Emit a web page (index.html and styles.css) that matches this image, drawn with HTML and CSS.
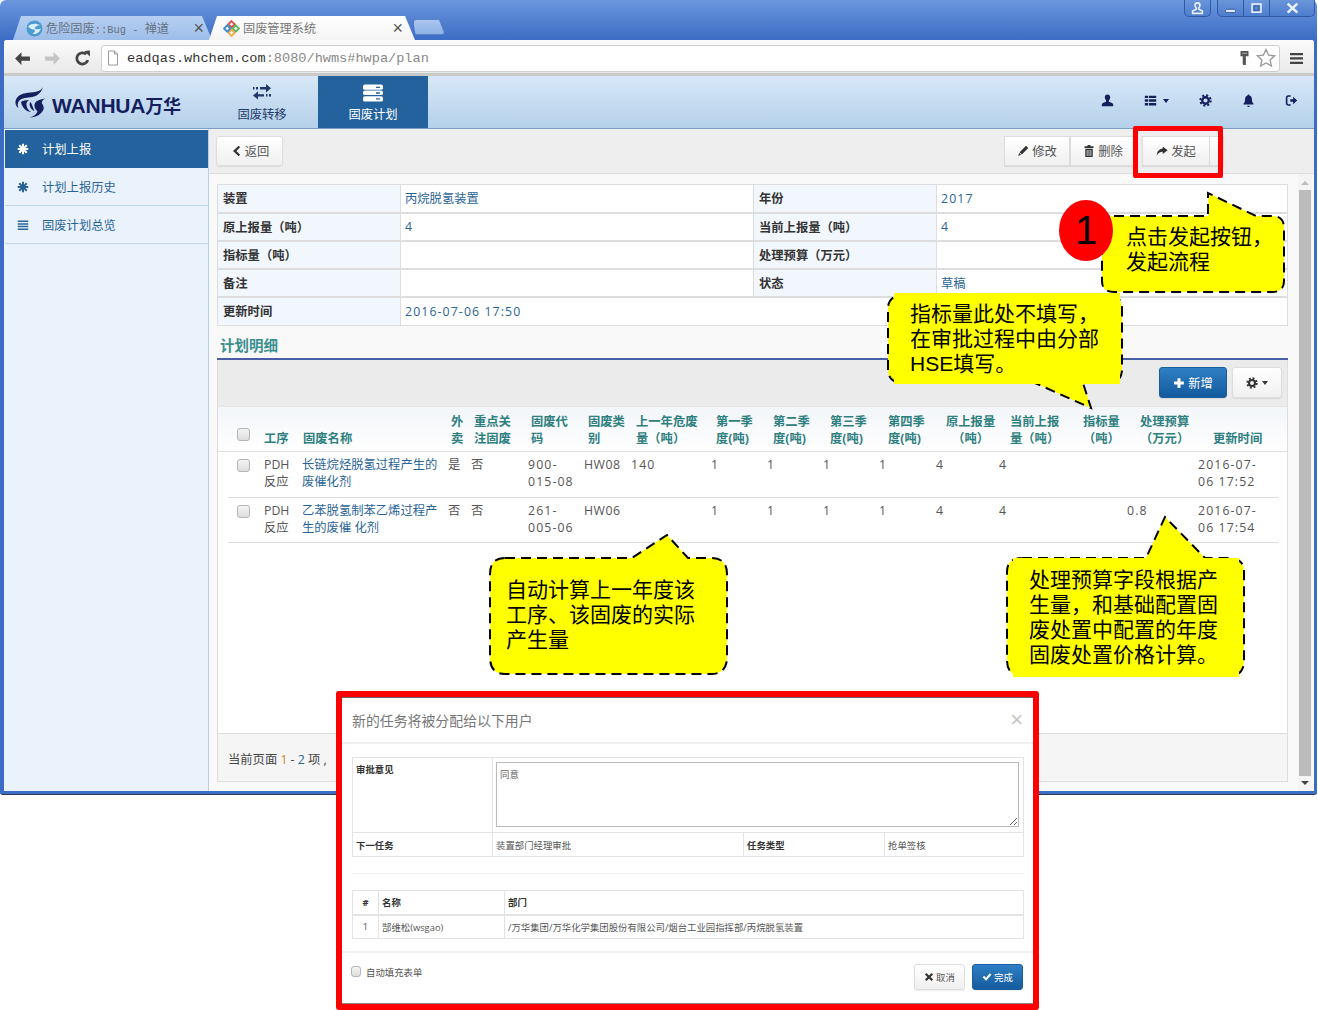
FILE: index.html
```html
<!DOCTYPE html>
<html lang="zh-CN">
<head>
    <meta charset="UTF-8">
    <meta name="viewport" content="width=device-width, initial-scale=1.0">
    <title>固废管理系统</title>
    <link rel="stylesheet" href="styles.css">
</head>
<body>
    <svg class="defs" xmlns="http://www.w3.org/2000/svg">
        <symbol id="i-asterisk" viewBox="0 0 16 16"><path d="M8 1v14M1 8h14M3 3l10 10M13 3L3 13" fill="none" stroke="currentColor" stroke-width="2.600"/></symbol>
        <symbol id="i-list" viewBox="0 0 16 16"><path d="M1 2h14v2H1zM1 5.500h14v2H1zM1 9h14v2H1zM1 12.500h14v2H1z" fill="currentColor"/></symbol>
        <symbol id="i-thlist" viewBox="0 0 16 16"><path d="M1 2h4v3H1zM6 2h9v3H6zM1 6.500h4v3H1zM6 6.500h9v3H6zM1 11h4v3H1zM6 11h9v3H6z" fill="currentColor"/></symbol>
        <symbol id="i-transfer" viewBox="0 0 20 18"><path d="M8 3h6V0l5 4.200-5 4.200V5.500H8zM12 12.500H6v3l-5-4 5-4.200v3h6z" fill="currentColor"/><path d="M1 3h1.500v2.500H1zM4 3h2v2.500H4zM14 10h1.500v2.500H14zM17 10h2v2.500h-2z" fill="currentColor"/></symbol>
        <symbol id="i-hdd" viewBox="0 0 20 20" preserveAspectRatio="none"><path d="M2 .5h16q2 0 2 2V5q0 1.500-2 1.500H2Q0 6.500 0 5V2.500q0-2 2-2zM2 7.300h16q2 0 2 2v1.500q0 1.500-2 1.500H2q-2 0-2-1.500V9.300q0-2 2-2zM2 13.500h16q2 0 2 2V18q0 1.500-2 1.500H2Q0 19.500 0 18v-2.500q0-2 2-2z" fill="currentColor"/><path d="M13 3h4v1.500h-4zM13 9.200h4v1.500h-4zM13 15.800h4v1.500h-4z" fill="#23629c"/></symbol>
        <symbol id="i-user" viewBox="0 0 16 16"><path d="M8 .5c2.200 0 3.300 1.500 3.300 3.500 0 1.500-.7 3-1.500 3.800v1.400c0 .7 4.700 1.300 5.200 3.300V15H1v-2.500c.5-2 5.200-2.600 5.200-3.300V7.800C5.400 7 4.700 5.500 4.700 4 4.700 2 5.800.5 8 .5z" fill="currentColor"/></symbol>
        <symbol id="i-cog" viewBox="0 0 16 16"><circle cx="8" cy="8" r="4" fill="none" stroke="currentColor" stroke-width="2.800"/><circle cx="8" cy="8" r="6.300" fill="none" stroke="currentColor" stroke-width="2.600" stroke-dasharray="2.500 2.450"/></symbol>
        <symbol id="i-bell" viewBox="0 0 16 16"><path d="M8 .5c.8 0 1.200.5 1.200 1.300 2 .6 3 2.200 3 4.700 0 3 .8 4.500 2 5.500v1H1.800v-1c1.200-1 2-2.500 2-5.500 0-2.500 1-4.100 3-4.700C6.800 1 7.200.5 8 .5zM6.300 14.500h3.400C9.500 15.500 8.800 16 8 16s-1.500-.5-1.700-1.500z" fill="currentColor"/></symbol>
        <symbol id="i-logout" viewBox="0 0 16 16"><path d="M7 2.500H4Q2 2.500 2 4.500v7q0 2 2 2h3" fill="none" stroke="currentColor" stroke-width="2"/><path d="M6.500 6.500H10V3.500L15 8l-5 4.500v-3H6.500z" fill="currentColor"/></symbol>
        <symbol id="i-chevron" viewBox="0 0 16 16"><path d="M11.500 1L4 8l7.500 7 2-2L8.500 8l5-5z" fill="currentColor"/></symbol>
        <symbol id="i-pencil" viewBox="0 0 16 16"><path d="M12 1l3 3-8.500 8.500-3-3zM3 10.500L5.500 13 1.500 14.500z" fill="currentColor"/></symbol>
        <symbol id="i-trash" viewBox="0 0 16 16"><path d="M6 0h4v1.500h4V4H2V1.500h4zM3 5h10v11H3zM5 6.500v8h1v-8zM7.500 6.500v8h1v-8zM10 6.500v8h1v-8z" fill="currentColor" fill-rule="evenodd"/></symbol>
        <symbol id="i-share" viewBox="0 0 16 16"><path d="M9 2l6.500 5L9 12V9C5 9 3 10.500 1 14c0-5 3-9 8-9.500z" fill="currentColor"/></symbol>
        <symbol id="i-plus" viewBox="0 0 16 16"><path d="M6 1.500h4V6h4.500v4H10v4.500H6V10H1.500V6H6z" fill="currentColor"/></symbol>
        <symbol id="i-remove" viewBox="0 0 16 16"><path d="M4 1.500L8 5.500l4-4L14.500 4l-4 4 4 4-2.500 2.500-4-4-4 4L1.500 12l4-4-4-4z" fill="currentColor"/></symbol>
        <symbol id="i-ok" viewBox="0 0 16 16"><path d="M1 8.500l2.500-2.500 3 3L12.500 2 15 4.500 6.500 14z" fill="currentColor"/></symbol>
    </svg>

    <div class="window">
        <div class="tabstrip">
            <div class="tab tab-off">
                <svg class="favicon" viewBox="0 0 16 16"><circle cx="8" cy="8" r="7.500" fill="#4b9bd0"/><path d="M2 6c3-3 8-3 11-1-2 0-4 1-5 3 2 1 4 1 6 0-1 4-5 6-8 5 2-1 3-3 2-4-2 0-4-1-6-3z" fill="#d8eef8"/></svg>
                <span class="tab-title">危险固废<span class="tab-mono">::Bug - </span>禅道</span>
                <span class="tab-close">×</span>
            </div>
            <div class="tab tab-on">
                <svg class="favicon" viewBox="0 0 16 16"><path d="M8 1l3 3-3 3-3-3z" fill="none" stroke="#d9534f" stroke-width="1.800"/><path d="M12 5l3 3-3 3-3-3z" fill="none" stroke="#5cb85c" stroke-width="1.800"/><path d="M8 9l3 3-3 3-3-3z" fill="none" stroke="#f0ad4e" stroke-width="1.800"/><path d="M4 5l3 3-3 3-3-3z" fill="none" stroke="#428bca" stroke-width="1.800"/></svg>
                <span class="tab-title">固废管理系统</span>
                <span class="tab-close">×</span>
            </div>
            <div class="tab-new"></div>
            <div class="win-btns">
                <div class="win-group win-user">
                    <span class="win-btn"><svg class="win-icon" viewBox="0 0 16 16"><path d="M8 1c2 0 3 1.300 3 3s-.8 3-1.500 3.500V9l4.500 2v3H2v-3l4.500-2V7.500C5.800 7 5 5.700 5 4s1-3 3-3z" fill="none" stroke="#e8eefa" stroke-width="2"/></svg></span>
                </div>
                <div class="win-group">
                    <span class="win-btn"><svg class="win-icon" viewBox="0 0 16 16"><rect x="2" y="9" width="12" height="4" rx="1" fill="#dfe8f8" stroke="#2c4f90"/></svg></span>
                    <span class="win-btn"><svg class="win-icon" viewBox="0 0 16 16"><rect x="2.500" y="2.500" width="11" height="10" fill="none" stroke="#e8eefa" stroke-width="2"/><rect x="5" y="5" width="6" height="5" fill="none" stroke="#2c4f90"/></svg></span>
                    <span class="win-btn win-close"><svg class="win-icon" viewBox="0 0 16 16"><path d="M2 2l12 11M14 2L2 13" stroke="#eef2fb" stroke-width="3"/></svg></span>
                </div>
            </div>
        </div>

        <div class="frame">
            <div class="toolbar">
                <svg class="tool-icon" viewBox="0 0 16 16"><path d="M7 2L1 8l6 6V10h8V6H7z" fill="#444"/></svg>
                <svg class="tool-icon" viewBox="0 0 16 16"><path d="M9 2l6 6-6 6V10H1V6h8z" fill="#c4c4c4"/></svg>
                <svg class="tool-icon" viewBox="0 0 16 16"><path d="M13 9.500A5.300 5.300 0 1 1 11.500 4" fill="none" stroke="#444" stroke-width="2.600"/><path d="M9.500 1L15 .5V6z" fill="#444"/></svg>
                <div class="omnibox">
                    <svg class="doc-icon" viewBox="0 0 12 16"><path d="M1.500 1h6l3 3v11h-9zM7.500 1v3h3" fill="#fff" stroke="#999"/></svg>
                    <span class="url"><span class="url-host">eadqas.whchem.com</span>:8080/hwms#hwpa/plan</span>
                    <svg class="key-icon" viewBox="0 0 12 18"><path d="M1.500 1h9v6h-3v10H5l-1-1V7H1.500z" fill="#555"/><path d="M3 3h6v1.500H3z" fill="#999"/></svg>
                    <svg class="star-icon" viewBox="0 0 20 20"><path d="M10 1.500l2.600 5.600 6 .7-4.500 4.100 1.300 6.100L10 15l-5.400 3 1.300-6.100L1.400 7.800l6-.7z" fill="#fff" stroke="#999" stroke-width="1.300"/></svg>
                </div>
                <svg class="menu-icon" viewBox="0 0 14 14"><path d="M0 1h14v2.500H0zM0 5.700h14v2.500H0zM0 10.500h14V13H0z" fill="#444"/></svg>
            </div>

            <div class="topnav">
                <div class="logo">
                    <svg class="logo-mark" viewBox="0 0 32 31"><path d="M28 0c-2 4-6 5-12 5.500C8 6 2 8 .5 14c-.5 3 1 6 3 7-1.500-3-1-7 3-9 4-2 10-1 14-3 3-1.500 6-4 7.500-9z" fill="#161f5e"/><path d="M6 15c2-1.500 5-2 8-1.500-2 1-3 2.500-2.500 5 .5 3 2 5 4.500 6.500-4 0-9-4-10-10z" fill="#161f5e"/><path d="M31 11c-3 1-6 1.500-9 3-3 2-3 5-1.500 8l2 2.500c-1 3-4 5-8 6 6 0 12-3 14-8 .5-2 0-4-1.500-6-.8-1.500 1-4 4-5.500z" fill="#161f5e"/><path d="M15 15c2 1 2.500 5 4.500 9-3-1-6-5-4.500-9z" fill="#161f5e"/></svg>
                    <span class="logo-text">WANHUA<span class="logo-cn">万华</span></span>
                </div>
                <a class="nav-tab nav-tab-plain">
                    <svg class="nav-icon"><use href="#i-transfer"/></svg>
                    <span>固废转移</span>
                </a>
                <a class="nav-tab nav-tab-active">
                    <svg class="nav-icon"><use href="#i-hdd"/></svg>
                    <span>固废计划</span>
                </a>
                <div class="nav-tools">
                    <svg class="tool"><use href="#i-user"/></svg>
                    <span class="tool-drop"><svg class="tool"><use href="#i-thlist"/></svg><i class="caret"></i></span>
                    <svg class="tool"><use href="#i-cog"/></svg>
                    <svg class="tool"><use href="#i-bell"/></svg>
                    <svg class="tool"><use href="#i-logout"/></svg>
                </div>
            </div>

            <div class="main">
                <div class="sidebar">
                    <a class="side-item side-active"><svg class="side-icon"><use href="#i-asterisk"/></svg>计划上报</a>
                    <a class="side-item"><svg class="side-icon"><use href="#i-asterisk"/></svg>计划上报历史</a>
                    <a class="side-item"><svg class="side-icon"><use href="#i-list"/></svg>固废计划总览</a>
                </div>

                <div class="content">
                    <div class="actionbar">
                        <button class="btn btn-back" type="button"><svg class="btn-icon"><use href="#i-chevron"/></svg>返回</button>
                        <div class="actions">
                            <button class="btn btn-join" type="button"><svg class="btn-icon"><use href="#i-pencil"/></svg>修改</button>
                            <button class="btn btn-join" type="button"><svg class="btn-icon"><use href="#i-trash"/></svg>删除</button>
                            <button class="btn btn-start" type="button"><svg class="btn-icon"><use href="#i-share"/></svg>发起</button>
                            <button class="btn btn-more" type="button"></button>
                        </div>
                    </div>

                    <div class="body-wrap">
                        <div class="pane">
                            <table class="info">
                                <colgroup><col class="info-a"><col class="info-b"><col class="info-a"><col></colgroup>
                                <tr><th>装置</th><td><a>丙烷脱氢装置</a></td><th>年份</th><td><a class="n">2017</a></td></tr>
                                <tr><th>原上报量（吨）</th><td><a>4</a></td><th>当前上报量（吨）</th><td><a>4</a></td></tr>
                                <tr><th>指标量（吨）</th><td></td><th>处理预算（万元）</th><td></td></tr>
                                <tr><th>备注</th><td></td><th>状态</th><td><a>草稿</a></td></tr>
                                <tr><th>更新时间</th><td class="muted n" colspan="3">2016-07-06 17:50</td></tr>
                            </table>

                            <div class="section-title">计划明细</div>

                            <div class="grid">
                                <div class="grid-tools">
                                    <button class="btn btn-primary btn-add" type="button"><svg class="btn-icon"><use href="#i-plus"/></svg>新增</button>
                                    <button class="btn btn-gear" type="button"><svg class="btn-icon"><use href="#i-cog"/></svg><i class="caret"></i></button>
                                </div>

                                <table class="grid-head">
                                    <colgroup>
                                        <col class="h0"><col class="h1"><col class="h2"><col class="h3"><col class="h4"><col class="h5"><col class="h6"><col class="h7"><col class="h8"><col class="h9"><col class="h10"><col class="h11"><col class="h12"><col class="h13"><col class="h14"><col class="h15"><col class="h16"><col class="h17">
                                    </colgroup>
                                    <tr>
                                        <th></th>
                                        <th class="head-check"><input class="check" type="checkbox"></th>
                                        <th>工序</th>
                                        <th>固废名称</th>
                                        <th>外<br>卖</th>
                                        <th>重点关<br>注固废</th>
                                        <th>固废代<br>码</th>
                                        <th>固废类<br>别</th>
                                        <th>上一年危废<br>量（吨）</th>
                                        <th>第一季<br>度(吨)</th>
                                        <th>第二季<br>度(吨)</th>
                                        <th>第三季<br>度(吨)</th>
                                        <th>第四季<br>度(吨)</th>
                                        <th><span class="stack">原上报量<br>（吨）</span></th>
                                        <th>当前上报<br>量（吨）</th>
                                        <th><span class="stack">指标量<br>（吨）</span></th>
                                        <th><span class="stack">处理预算<br>（万元）</span></th>
                                        <th>更新时间</th>
                                    </tr>
                                </table>

                                <div class="grid-body">
                                    <table class="rows">
                                        <colgroup>
                                            <col class="r1"><col class="r2"><col class="r3"><col class="r4"><col class="r5"><col class="r6"><col class="r7"><col class="r8"><col class="r9"><col class="r10"><col class="r11"><col class="r12"><col class="r13"><col class="r14"><col class="r15"><col class="r16"><col>
                                        </colgroup>
                                        <tr>
                                            <td class="cell-check"><input class="check" type="checkbox"></td>
                                            <td>PDH<br>反应</td>
                                            <td><a>长链烷烃脱氢过程产生的<br>废催化剂</a></td>
                                            <td>是</td><td>否</td>
                                            <td class="n">900-<br>015-08</td>
                                            <td class="hw">HW08</td><td class="n">140</td>
                                            <td>1</td><td>1</td><td>1</td><td>1</td><td>4</td><td>4</td>
                                            <td></td><td></td>
                                            <td class="n">2016-07-<br>06 17:52</td>
                                        </tr>
                                        <tr>
                                            <td class="cell-check"><input class="check" type="checkbox"></td>
                                            <td>PDH<br>反应</td>
                                            <td><a>乙苯脱氢制苯乙烯过程产<br>生的废催 化剂</a></td>
                                            <td>否</td><td>否</td>
                                            <td class="n">261-<br>005-06</td>
                                            <td class="hw">HW06</td><td></td>
                                            <td>1</td><td>1</td><td>1</td><td>1</td><td>4</td><td>4</td>
                                            <td></td><td class="n">0.8</td>
                                            <td class="n">2016-07-<br>06 17:54</td>
                                        </tr>
                                    </table>
                                </div>

                                <div class="grid-foot">当前页面 <span class="num-a">1</span> - <span class="num-b">2</span> 项 ,</div>
                            </div>
                        </div>
                        <div class="scrollbar">
                            <i class="arrow-up"></i>
                            <div class="thumb"></div>
                            <i class="arrow-down"></i>
                        </div>
                    </div>
                </div>
            </div>
        </div>
    </div>

    <!-- annotations laid over the screenshot -->
    <div class="redbox redbox-start"></div>

    <div class="callout callout-1">
        <svg class="callout-shape" viewBox="0 0 190 106"><path class="bubble" d="M15 26H109V3L157 26H173Q185 26 185 38V91Q185 102 173 102H15Q3 102 3 91V38Q3 26 15 26z"/></svg>
        <p class="callout-text">点击发起按钮，<br>发起流程</p>
    </div>
    <div class="badge">1</div>

    <div class="callout callout-2">
        <svg class="callout-shape" viewBox="0 0 240 120"><path class="bubble" d="M18 2H222Q236 2 236 16V76Q236 90 222 90H197L205 115 149 90H18Q2 90 2 76V16Q2 2 18 2z"/><rect class="patch" x="8" y="0" width="226" height="91"/></svg>
        <p class="callout-text">指标量此处不填写，<br>在审批过程中由分部<br>HSE填写。</p>
    </div>

    <div class="callout callout-3">
        <svg class="callout-shape" viewBox="0 0 242 144"><path class="bubble" d="M18 26H145L180 3 201 26H224Q240 26 240 42V125Q240 142 224 142H18Q3 142 3 125V42Q3 26 18 26z"/></svg>
        <p class="callout-text">自动计算上一年度该<br>工序、该固废的实际<br>产生量</p>
    </div>

    <div class="callout callout-4">
        <svg class="callout-shape" viewBox="0 0 242 164"><path class="bubble" d="M18 44H142L161 3 201 44H225Q240 44 240 58V146Q240 162 225 162H18Q3 162 3 146V58Q3 44 18 44z"/><rect class="patch" x="9" y="44" width="226" height="119"/></svg>
        <p class="callout-text">处理预算字段根据产<br>生量，和基础配置固<br>废处置中配置的年度<br>固废处置价格计算。</p>
    </div>

    <div class="modal">
        <div class="modal-head">
            <span class="modal-title">新的任务将被分配给以下用户</span>
            <span class="modal-close">×</span>
        </div>
        <div class="modal-body">
            <table class="form-table">
                <colgroup><col class="f1"><col class="f2"><col class="f3"><col></colgroup>
                <tr class="form-row-big">
                    <th>审批意见</th>
                    <td colspan="3"><textarea class="remark">同意</textarea></td>
                </tr>
                <tr>
                    <th>下一任务</th><td>装置部门经理审批</td>
                    <th>任务类型</th><td>抢单签核</td>
                </tr>
            </table>
            <hr class="modal-rule">
            <table class="form-table user-table">
                <colgroup><col class="u1"><col class="u2"><col></colgroup>
                <tr class="user-head"><th class="center">#</th><th>名称</th><th>部门</th></tr>
                <tr><td class="center">1</td><td>郜维松(wsgao)</td><td>/万华集团/万华化学集团股份有限公司/烟台工业园指挥部/丙烷脱氢装置</td></tr>
            </table>
        </div>
        <div class="modal-foot">
            <label class="autofill"><input class="check" type="checkbox">自动填充表单</label>
            <div class="modal-actions">
                <button class="btn btn-cancel" type="button"><svg class="btn-icon"><use href="#i-remove"/></svg>取消</button>
                <button class="btn btn-primary btn-done" type="button"><svg class="btn-icon"><use href="#i-ok"/></svg>完成</button>
            </div>
        </div>
    </div>
</body>
</html>
```

FILE: styles.css
```css
html, body {
    margin: 0;
    height: 1010px;
    overflow: hidden;
    background-color: #fff;
}
body {
    position: relative;
    font-family: "Open Sans", "Noto Sans CJK SC", sans-serif;
    font-size: 12.3px;
    color: #555;
}
.defs {
    display: none;
}
a {
    color: #2a6496;
    text-decoration: none;
}
table {
    border-collapse: collapse;
    table-layout: fixed;
}
.n {
    letter-spacing: 1.1px;
}
.hw {
    letter-spacing: 0.5px;
}

/* browser window */
.window {
    width: 1317px;
    height: 795px;
    box-sizing: border-box;
    padding: 0 3px 3px 4px;
    border-bottom: 1px solid #2c3a52;
    border-radius: 6px 6px 3px 3px;
    background: linear-gradient(#6b97de, #3c6cc4 40px, #3c6cc4);
    display: flex;
    flex-direction: column;
}
.tabstrip {
    height: 40px;
    flex: none;
    display: flex;
    align-items: flex-end;
    padding-left: 9px;
    position: relative;
}
.tab {
    height: 24px;
    display: flex;
    align-items: center;
    box-sizing: border-box;
    font-size: 12.2px;
    clip-path: polygon(0 100%, 8px 0, calc(100% - 10px) 0, 100% 100%);
}
.tab-off {
    width: 199px;
    padding: 0 8px 0 13px;
    background: linear-gradient(#b6cff1, #9dbdea);
    color: #66727f;
}
.tab-on {
    width: 206px;
    margin-left: -3px;
    padding: 0 12px 0 14px;
    background: linear-gradient(#fff, #f4f4f4);
    color: #777;
}
.tab-mono {
    font-family: "Liberation Mono", monospace;
    font-size: 10.4px;
}
.favicon {
    width: 17px;
    height: 17px;
    margin-right: 3px;
    flex: none;
}
.tab-title {
    flex: 1;
    white-space: nowrap;
}
.tab-close {
    font-size: 18px;
    line-height: 20px;
    font-family: "Liberation Sans", sans-serif;
    color: #555;
}
.tab-new {
    width: 30px;
    height: 14px;
    margin: 0 0 5px -2px;
    border-radius: 3px;
    background: linear-gradient(#a9c6ee, #8fb2e6);
    border: 1px solid #5a82c6;
    clip-path: polygon(0 0, 80% 0, 100% 100%, 8% 100%);
}
.win-btns {
    margin-left: auto;
    align-self: flex-start;
    display: flex;
    gap: 6px;
    margin-right: -1px;
}
.win-group {
    display: flex;
    height: 16px;
    border: 1px solid #2f5aa8;
    border-top: none;
    border-radius: 0 0 5px 5px;
    background: linear-gradient(#6a95da, #4d7dcd);
}
.win-btn {
    width: 25px;
    display: flex;
    align-items: center;
    justify-content: center;
    border-left: 1px solid #2f5aa8;
}
.win-btn:first-child {
    border-left: none;
}
.win-close {
    width: 44px;
}
.win-icon {
    width: 13px;
    height: 13px;
}

/* frame: browser toolbar and page */
.frame {
    flex: 1;
    display: flex;
    flex-direction: column;
    min-height: 0;
    background-color: #fff;
    border-radius: 3px 3px 0 0;
    overflow: hidden;
}
.toolbar {
    height: 36px;
    flex: none;
    box-sizing: border-box;
    display: flex;
    align-items: center;
    padding: 3px 11px 0 10px;
    border-bottom: 3px solid #c9c9c9;
    background: linear-gradient(#fbfbfb, #e9e9e9);
}
.tool-icon {
    width: 17px;
    height: 17px;
    margin-right: 13px;
}
.omnibox {
    flex: 1;
    height: 27px;
    box-sizing: border-box;
    margin-left: -3px;
    margin-right: 10px;
    display: flex;
    align-items: center;
    padding: 0 3px 0 5px;
    background-color: #fff;
    border: 1px solid #cfcfcf;
    border-radius: 3px;
}
.doc-icon {
    width: 12px;
    height: 16px;
    margin-right: 8px;
}
.url {
    flex: 1;
    font-family: "Liberation Mono", monospace;
    font-size: 13.6px;
    color: #888;
}
.url-host {
    color: #333;
}
.key-icon {
    width: 11px;
    height: 16px;
    margin-right: 6px;
}
.star-icon {
    width: 20px;
    height: 20px;
}
.menu-icon {
    width: 13px;
    height: 13px;
}

/* app header */
.topnav {
    height: 53px;
    flex: none;
    box-sizing: border-box;
    display: flex;
    border-bottom: 1px solid #7d9fc6;
    background: linear-gradient(#d8e8f8, #b4d0ea);
    color: #1f3a6a;
}
.logo {
    width: 226px;
    padding-left: 11px;
    box-sizing: border-box;
    display: flex;
    align-items: center;
}
.logo-mark {
    width: 32px;
    height: 31px;
    margin-right: 5px;
}
.logo-text {
    font-family: "Liberation Sans", sans-serif;
    font-weight: 700;
    font-size: 21px;
    color: #161f5e;
    padding-top: 5px;
    letter-spacing: -0.2px;
    white-space: nowrap;
}
.logo-cn {
    font-family: "Noto Sans CJK SC", sans-serif;
    font-size: 18px;
}
.nav-tab {
    width: 110px;
    display: flex;
    flex-direction: column;
    align-items: center;
    box-sizing: border-box;
    padding-top: 8px;
    font-size: 12.3px;
    color: #1f3a6a;
}
.nav-tab-active {
    background-color: #23629c;
    color: #fff;
}
.nav-tab-plain {
    width: 86px;
    margin-left: -11px;
    margin-right: 13px;
}
.nav-icon {
    width: 20px;
    height: 18px;
    margin-bottom: 3px;
}
.nav-tools {
    margin-left: auto;
    display: flex;
    align-items: center;
    gap: 30px;
    padding: 0 16px 3px 0;
    color: #161f5e;
}
.tool {
    width: 13px;
    height: 13px;
}
.tool-drop {
    display: flex;
    align-items: center;
    gap: 6px;
}
.caret {
    display: inline-block;
    width: 0;
    height: 0;
    border-left: 3.5px solid transparent;
    border-right: 3.5px solid transparent;
    border-top: 4px solid currentColor;
}

/* page body */
.main {
    flex: 1;
    display: flex;
    min-height: 0;
}
.sidebar {
    width: 205px;
    box-sizing: border-box;
    flex: none;
    padding-top: 1px;
    padding-left: 1px;
    background-color: #eaf3fb;
    border-right: 1px solid #b5d0ea;
}
.side-item {
    height: 38px;
    display: flex;
    align-items: center;
    box-sizing: border-box;
    padding-left: 12px;
    border-bottom: 1px solid #c0d6ea;
    color: #2a6496;
}
.side-active {
    background-color: #23629c;
    color: #fff;
    border-bottom: none;
}
.side-icon {
    width: 12px;
    height: 12px;
    margin-right: 13px;
}
.content {
    flex: 1;
    min-width: 0;
    display: flex;
    flex-direction: column;
    background-color: #f9f9f9;
}
.actionbar {
    height: 45px;
    flex: none;
    box-sizing: border-box;
    display: flex;
    padding: 7px 0 0 7px;
    background-color: #eee;
    border-bottom: 1px solid #ddd;
}
.btn {
    height: 30px;
    padding: 0;
    display: inline-flex;
    align-items: center;
    justify-content: center;
    box-sizing: border-box;
    font-family: inherit;
    font-size: 12.3px;
    color: #555;
    background: linear-gradient(#fff, #f0f0f0);
    border: 1px solid #ddd;
    border-radius: 3px;
    box-shadow: 0 1px 1px rgba(0, 0, 0, 0.08);
}
.btn-icon {
    width: 12px;
    height: 12px;
    margin-right: 3px;
    color: #333;
}
.btn-back {
    width: 67px;
}
.actions {
    margin-left: auto;
    margin-right: 90px;
    display: flex;
}
.btn-join {
    width: 66px;
    border-radius: 0;
}
.btn-start {
    width: 68px;
    margin-left: 6px;
    border-radius: 0;
}
.btn-more {
    width: 14px;
    border-radius: 0;
    border-left: none;
}
.body-wrap {
    flex: 1;
    min-height: 0;
    display: flex;
}
.pane {
    flex: 1;
    min-width: 0;
    box-sizing: border-box;
    padding: 10px 10px 9px 8px;
    display: flex;
    flex-direction: column;
}
.scrollbar {
    width: 14px;
    margin-right: 2px;
    flex: none;
    display: flex;
    flex-direction: column;
    align-items: center;
    padding: 7px 0 6px;
    box-sizing: border-box;
    background-color: #f4f4f4;
}
.thumb {
    flex: 1;
    width: 12px;
    background-color: #bcbcbc;
    margin: 5px 0;
}
.arrow-up, .arrow-down {
    width: 0;
    height: 0;
    border-left: 4px solid transparent;
    border-right: 4px solid transparent;
}
.arrow-up {
    border-bottom: 4px solid #bbb;
}
.arrow-down {
    border-top: 4px solid #444;
}

/* plan info */
.info {
    width: 1071px;
    flex: none;
    background-color: #fff;
    border: 1px solid #ddd;
}
.info-a {
    width: 183px;
}
.info-b {
    width: 353px;
}
.info th, .info td {
    height: 28px;
    padding: 0 5px;
    box-sizing: border-box;
    border: 1px solid #ddd;
    border-width: 0 1px 2px 0;
    text-align: left;
}
.info td {
    padding-left: 4px;
}
.info th {
    background-color: #f2f7fd;
    font-weight: 700;
    color: #333;
}
.info tr:last-child th, .info tr:last-child td {
    height: 29px;
    border-bottom-width: 1px;
}
.info .muted {
    color: #2a6496;
}
.section-title {
    height: 34px;
    flex: none;
    box-sizing: border-box;
    padding: 9px 0 0 3px;
    font-size: 14.5px;
    line-height: 22px;
    font-weight: 700;
    color: #3a8f8f;
    border-bottom: 2px solid #4a5ea6;
}
.grid {
    flex: 1;
    min-height: 0;
    display: flex;
    flex-direction: column;
    border: 1px solid #ddd;
    border-top: none;
    background-color: #fff;
}
.grid-tools {
    height: 46px;
    flex: none;
    box-sizing: border-box;
    display: flex;
    justify-content: flex-end;
    gap: 5px;
    padding: 7px 5px 0 0;
    background-color: #ebebeb;
}
.btn-primary {
    color: #fff;
    background: linear-gradient(#2f7fc4, #145a9e);
    border: 1px solid #1b5e9f;
}
.btn-primary .btn-icon {
    color: #fff;
}
.btn-add {
    width: 68px;
    height: 31px;
}
.btn-gear {
    width: 50px;
    height: 31px;
    color: #333;
}
.btn-gear .btn-icon {
    margin-right: 4px;
}
.grid-head {
    flex: none;
    width: 1069px;
    height: 46px;
    background: linear-gradient(#f2f5f9, #fff);
    border-bottom: 1px solid #ddd;
    border-top: 1px solid #e4e4e4;
    box-sizing: border-box;
}
.grid-head th {
    padding: 0 0 4px;
    vertical-align: bottom;
    text-align: left;
    font-weight: 700;
    font-size: 12.3px;
    line-height: 17px;
    color: #2e8080;
    white-space: nowrap;
}
.grid-head .head-check {
    padding: 0 0 9px 9px;
}
.stack {
    display: inline-block;
    text-align: center;
}
.h0 { width: 10px; }
.h1 { width: 36px; }
.h2 { width: 39px; }
.h3 { width: 148px; }
.h4 { width: 23px; }
.h5 { width: 57px; }
.h6 { width: 57px; }
.h7 { width: 48px; }
.h8 { width: 80px; }
.h9 { width: 57px; }
.h10 { width: 57px; }
.h11 { width: 58px; }
.h12 { width: 58px; }
.h13 { width: 64px; }
.h14 { width: 73px; }
.h15 { width: 57px; }
.h16 { width: 73px; }
.h17 { width: 74px; }
.check {
    width: 13px;
    height: 13px;
    margin: 0;
    appearance: none;
    background: linear-gradient(#f4f4f4, #ddd);
    border: 1px solid #b5b5b5;
    border-radius: 3px;
    vertical-align: middle;
}
.grid-body {
    flex: 1;
    min-height: 0;
    padding: 0 9px 0 10px;
}
.rows {
    width: 1050px;
}
.rows td {
    height: 45px;
    padding: 4px 0 0;
    box-sizing: border-box;
    border-bottom: 1px solid #ddd;
    vertical-align: top;
    line-height: 17px;
    white-space: nowrap;
}
.rows .cell-check {
    padding-left: 9px;
}
.r1 { width: 36px; }
.r2 { width: 38px; }
.r3 { width: 146px; }
.r4 { width: 23px; }
.r5 { width: 57px; }
.r6 { width: 56px; }
.r7 { width: 47px; }
.r8 { width: 80px; }
.r9 { width: 56px; }
.r10 { width: 56px; }
.r11 { width: 56px; }
.r12 { width: 57px; }
.r13 { width: 63px; }
.r14 { width: 72px; }
.r15 { width: 56px; }
.r16 { width: 71px; }
.grid-foot {
    height: 48px;
    flex: none;
    box-sizing: border-box;
    padding: 16px 0 0 10px;
    background-color: #f5f5f5;
    border-top: 1px solid #ddd;
    color: #444;
}
.num-a {
    color: #c68a2e;
}
.num-b {
    color: #2a6496;
}

/* annotations */
.redbox {
    position: absolute;
    box-sizing: border-box;
    border: 5px solid #f00;
    border-radius: 2px;
}
.redbox-start {
    left: 1133px;
    top: 126px;
    width: 90px;
    height: 52px;
}
.callout {
    position: absolute;
    font-family: "Liberation Sans", "Noto Sans CJK SC", sans-serif;
    font-size: 21px;
    line-height: 25px;
    color: #000;
}
.callout-shape {
    position: absolute;
    left: 0;
    top: 0;
    width: 100%;
    height: 100%;
}
.bubble {
    fill: #ff0;
    stroke: #000;
    stroke-width: 2;
    stroke-dasharray: 10 6;
}
.patch {
    fill: #ff0;
}
.callout-text {
    position: relative;
    margin: 0;
    white-space: nowrap;
}
.callout-1 {
    left: 1099px;
    top: 190px;
    width: 190px;
    height: 106px;
}
.callout-1 .callout-text {
    padding: 34px 0 0 27px;
}
.callout-2 {
    left: 886px;
    top: 293px;
    width: 240px;
    height: 120px;
}
.callout-2 .callout-text {
    padding: 8px 0 0 24px;
}
.callout-3 {
    left: 487px;
    top: 532px;
    width: 242px;
    height: 144px;
}
.callout-3 .callout-text {
    padding: 45px 0 0 19px;
}
.callout-4 {
    left: 1004px;
    top: 514px;
    width: 242px;
    height: 164px;
}
.callout-4 .callout-text {
    padding: 53px 0 0 25px;
}
.badge {
    position: absolute;
    left: 1059px;
    top: 200px;
    width: 54px;
    height: 61px;
    border-radius: 50%;
    background-color: #f00;
    color: #000;
    font-family: "Liberation Sans", sans-serif;
    font-size: 40px;
    line-height: 61px;
    text-align: center;
}

/* approval dialog */
.modal {
    position: absolute;
    left: 336px;
    top: 691px;
    width: 703px;
    height: 319px;
    box-sizing: border-box;
    border: 6px solid #f00;
    border-radius: 3px;
    background-color: #fff;
    display: flex;
    flex-direction: column;
    font-size: 9.4px;
    color: #555;
}
.modal-head {
    height: 47px;
    flex: none;
    box-sizing: border-box;
    display: flex;
    justify-content: space-between;
    align-items: center;
    padding: 0 10px;
    border-top: 1px solid #666;
    border-bottom: 2px solid #f0f0f0;
}
.modal-title {
    font-size: 13.9px;
    color: #777;
}
.modal-close {
    font-family: "Liberation Sans", sans-serif;
    font-size: 22px;
    color: #c4c4c4;
}
.modal-body {
    flex: 1;
    min-height: 0;
    padding: 13px 9px 0 10px;
}
.form-table {
    width: 672px;
    border: 1px solid #e3e3e3;
}
.form-table th, .form-table td {
    height: 24px;
    padding: 0 3px;
    box-sizing: border-box;
    border: 1px solid #e3e3e3;
    text-align: left;
    font-weight: 400;
    color: #555;
}
.form-table th {
    font-weight: 700;
    color: #333;
}
.f1 { width: 140px; }
.f2 { width: 251px; }
.f3 { width: 141px; }
.form-row-big th, .form-row-big td {
    height: 75px;
    vertical-align: top;
    padding-top: 4px;
}
.remark {
    display: block;
    width: 523px;
    height: 65px;
    box-sizing: border-box;
    margin: 0;
    padding: 4px 3px;
    border: 1px solid #bbb;
    font-family: inherit;
    font-size: 9.4px;
    color: #666;
}
.modal-rule {
    margin: 16px 0;
    border: none;
    border-top: 1px solid #eee;
}
.u1 { width: 26px; }
.u2 { width: 126px; }
.user-head th {
    border-bottom-width: 2px;
}
.center {
    text-align: center !important;
}
.modal-foot {
    height: 53px;
    flex: none;
    box-sizing: border-box;
    display: flex;
    justify-content: space-between;
    padding: 0 10px 0 9px;
    border-top: 2px solid #f0f0f0;
    border-bottom: 1px solid #888;
}
.autofill {
    display: flex;
    align-items: center;
    gap: 5px;
    height: 15px;
    margin-top: 11px;
}
.autofill .check {
    width: 10px;
    height: 11px;
}
.modal-actions {
    display: flex;
    gap: 7px;
    padding-top: 11px;
}
.modal-actions .btn {
    width: 51px;
    height: 26px;
    font-size: 9.4px;
}
.modal-actions .btn-icon {
    width: 10px;
    height: 10px;
    margin-right: 2px;
}
```
